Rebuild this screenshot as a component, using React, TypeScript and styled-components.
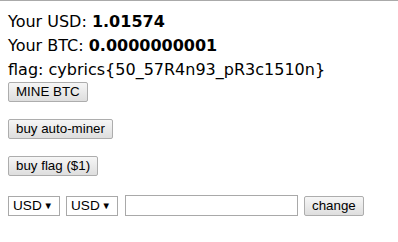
import React from "react";
import styled, { createGlobalStyle } from "styled-components";

const Global = createGlobalStyle`
  html, body { margin: 0; padding: 0; background: #fff; }
  body { border-top: 1px solid #aaaaaa; }
`;

const Page = styled.div`
  padding: 9px 8px 0 8px;
  font-family: "DejaVu Sans", Verdana, sans-serif;
  font-size: 16px;
  color: #000;
  display: flex;
  flex-direction: column;
  align-items: flex-start;
`;

const Line = styled.div`
  line-height: 24px;
`;

const Value = styled.b`
  font-weight: bold;
`;

const Btn = styled.button<{ $mt?: number }>`
  font-family: "Liberation Sans", Arial, sans-serif;
  font-size: 13.33px;
  color: #000;
  height: 20px;
  padding: 0 7px;
  margin-top: ${(p) => p.$mt ?? 0}px;
  border: 1px solid #adadad;
  border-radius: 2px;
  background: linear-gradient(#f6f6f6, #dedede);
  line-height: 18px;
`;

const Row = styled.div`
  display: flex;
  align-items: center;
  gap: 6px;
  margin-top: 19px;
`;

const Select = styled.div`
  font-family: "Liberation Sans", Arial, sans-serif;
  font-size: 13.6px;
  height: 20px;
  box-sizing: border-box;
  border: 1px solid #a9a9a9;
  display: flex;
  align-items: center;
  justify-content: space-between;
  padding: 0 6px 0 4px;
  width: 52px;
  background: #fff;
`;

const Arrow = styled.span`
  font-size: 9.5px;
`;

const Input = styled.input`
  width: 173px;
  height: 21px;
  box-sizing: border-box;
  border: 1px solid #a9a9a9;
  margin: 0 0 0 1px;
  padding: 1px 2px;
`;

export default function App() {
  return (
    <>
      <Global />
      <Page>
        <Line>
          Your USD: <Value>1.01574</Value>
        </Line>
        <Line>
          Your BTC: <Value>0.0000000001</Value>
        </Line>
        <Line>flag: cybrics{"{"}50_57R4n93_pR3c1510n{"}"}</Line>
        <Btn>MINE BTC</Btn>
        <Btn $mt={17}>buy auto-miner</Btn>
        <Btn $mt={17}>buy flag ($1)</Btn>
        <Row>
          <Select>
            USD <Arrow>▼</Arrow>
          </Select>
          <Select>
            USD <Arrow>▼</Arrow>
          </Select>
          <Input />
          <Btn>change</Btn>
        </Row>
      </Page>
    </>
  );
}
